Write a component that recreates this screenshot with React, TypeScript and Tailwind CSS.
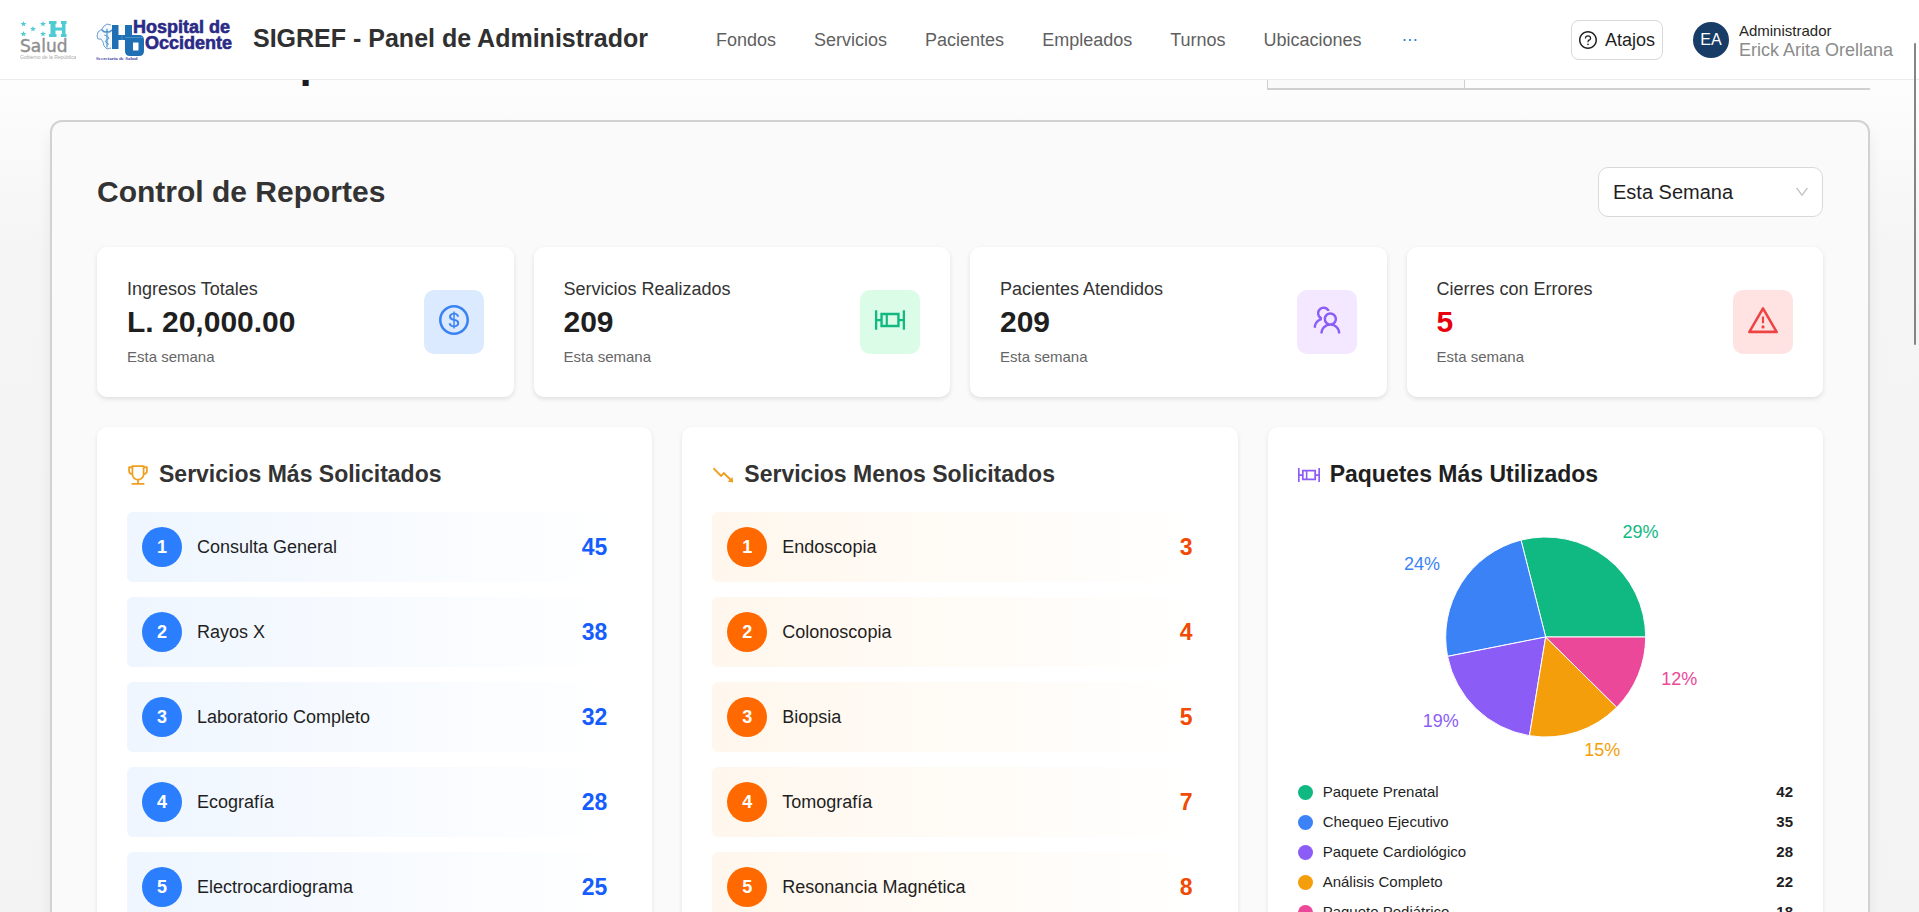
import { useState } from "react";
import type { ComponentType } from "react";
import {
  AiOutlineBoxPlot,
  AiOutlineDollar,
  AiOutlineDown,
  AiOutlineEllipsis,
  AiOutlineFall,
  AiOutlineQuestionCircle,
  AiOutlineTeam,
  AiOutlineTrophy,
  AiOutlineWarning,
} from "react-icons/ai";

type IconType = ComponentType<{ className?: string; viewBox?: string }>;

// Ant icons keep a margin of 64 units round the drawing; this crops it away.
const TIGHT = "64 64 896 896";

const NAV = ["Fondos", "Servicios", "Pacientes", "Empleados", "Turnos", "Ubicaciones"];

const STATS: { label: string; value: string; valueClass: string; boxClass: string; Icon: IconType }[] = [
  { label: "Ingresos Totales", value: "L. 20,000.00", valueClass: "text-[#1f1f1f]", boxClass: "bg-blue-100 text-[#3b82f6]", Icon: AiOutlineDollar },
  { label: "Servicios Realizados", value: "209", valueClass: "text-[#1f1f1f]", boxClass: "bg-green-100 text-[#10b981]", Icon: AiOutlineBoxPlot },
  { label: "Pacientes Atendidos", value: "209", valueClass: "text-[#1f1f1f]", boxClass: "bg-purple-100 text-[#8b5cf6]", Icon: AiOutlineTeam },
  { label: "Cierres con Errores", value: "5", valueClass: "text-[#e7000b]", boxClass: "bg-red-100 text-[#ef4444]", Icon: AiOutlineWarning },
];

const MOST: [string, number][] = [
  ["Consulta General", 45],
  ["Rayos X", 38],
  ["Laboratorio Completo", 32],
  ["Ecografía", 28],
  ["Electrocardiograma", 25],
];

const LEAST: [string, number][] = [
  ["Endoscopia", 3],
  ["Colonoscopia", 4],
  ["Biopsia", 5],
  ["Tomografía", 7],
  ["Resonancia Magnética", 8],
];

const PACKAGES = [
  { name: "Paquete Prenatal", value: 42, color: "#10b981", dot: "bg-[#10b981]" },
  { name: "Chequeo Ejecutivo", value: 35, color: "#3b82f6", dot: "bg-[#3b82f6]" },
  { name: "Paquete Cardiológico", value: 28, color: "#8b5cf6", dot: "bg-[#8b5cf6]" },
  { name: "Análisis Completo", value: 22, color: "#f59e0b", dot: "bg-[#f59e0b]" },
  { name: "Paquete Pediátrico", value: 18, color: "#ec4899", dot: "bg-[#ec4899]" },
];

const STAR = "M0-3 .8-.9 3-.9 1.2.5 1.9 2.6 0 1.3-1.9 2.6-1.2.5-3-.9-.8-.9Z";

function SaludLogo() {
  return (
    <svg width="56" height="42" viewBox="0 0 56 42" className="shrink-0" aria-label="Salud">
      <g fill="#4fcbd3">
        {[[3.5, 5], [23, 5], [13, 10], [3.5, 15], [23, 15]].map(([x, y]) => (
          <path key={`${x}-${y}`} d={STAR} transform={`translate(${x} ${y})`} />
        ))}
        <path d="M29 2h7.500v3h-1v3.500h6.500V5h-1V2h5.500v3h-1v10h1v3h-5.500v-3h1v-3.500h-6.500V15h1v3H29v-3h1.500V5H29z" />
      </g>
      <text x="0" y="33" fontSize="17" fontFamily="DejaVu Sans, sans-serif" fill="#8f8f8f" stroke="#8f8f8f" strokeWidth=".4">Salud</text>
      <text x="0" y="40" fontSize="5" fontFamily="Liberation Sans, sans-serif" fill="#a8a8a8">Gobierno de la República</text>
    </svg>
  );
}

function HospitalLogo() {
  return (
    <svg width="137" height="42" viewBox="0 0 137 42" className="shrink-0 overflow-visible" aria-label="Hospital de Occidente">
      <path d="M15 6 11 5 8 7 6 10 2 13 1 17 2 20 5 20 7 23 8 27 11 30 15 29" fill="#f4f9fd" stroke="#4b86c2" strokeWidth=".8" />
      <g fill="none" stroke="#4f93c9" strokeLinecap="round">
        <path d="M11 10v18" strokeWidth="1.200" />
        <path d="M6 11q2.500 3 5 1.500 2.500 1.500 5-1.500" strokeWidth="1.600" />
        <path d="M8.500 16q5 1.500 4.500 3.500-4 1.500-3.500 3.500 3.500 1 3 2.500" strokeWidth=".9" />
      </g>
      <path
        fillRule="evenodd"
        d="M16 6h6.500v10H29V6h7v10h7q5 0 5 5v11q0 5-5 5h-9q-5 0-5-5V21h-6.500v9H16zM37 23.500v8h5.500v-8z"
        fill="#1f6fb5"
      />
      <path d="M26 16v5M29 18.500h18" stroke="#5b9fd4" strokeWidth=".7" />
      <g fontFamily="Liberation Sans, Arial, sans-serif" fontWeight="700" fontSize="18" fill="#2b2a86" stroke="#2b2a86" strokeWidth=".6">
        <text x="37" y="14">Hospital de</text>
        <text x="49" y="30">Occidente</text>
      </g>
      <text x="0" y="41" fontSize="5" fontWeight="700" fontFamily="Liberation Serif, serif" fill="#4a48a4">Secretaria de Salud</text>
    </svg>
  );
}

function Header() {
  return (
    <header className="relative z-10 flex h-20 shrink-0 items-center border-b border-[#ececec] bg-white pr-[26px] pl-5">
      <div className="flex items-center gap-5">
        <SaludLogo />
        <HospitalLogo />
        <h1 className="pb-1 text-[25px] leading-8 font-bold whitespace-nowrap text-[#303030]">SIGREF - Panel de Administrador</h1>
      </div>
      <nav className="ml-17 flex items-center gap-[38px] text-lg text-[#5f5f5f]">
        {NAV.map((item) => (
          <a key={item} href="#">{item}</a>
        ))}
        <button type="button" aria-label="Más opciones" className="text-[#1677e6]">
          <AiOutlineEllipsis className="size-5" />
        </button>
      </nav>
      <div className="ml-auto flex items-center gap-[30px]">
        <button type="button" className="flex h-10 items-center gap-2 rounded-lg border border-[#d9d9d9] bg-white px-[7px] text-lg text-[#1f1f1f]">
          <AiOutlineQuestionCircle viewBox={TIGHT} className="size-[18px]" />
          Atajos
        </button>
        <div className="flex items-center gap-[10px]">
          <span className="flex size-9 items-center justify-center rounded-full bg-[#173d66] text-base text-white">EA</span>
          <div className="flex flex-col pt-0.5">
            <span className="text-[15px] leading-[18px] text-[#262626]">Administrador</span>
            <span className="text-lg leading-5 text-[#8c8c8c]">Erick Arita Orellana</span>
          </div>
        </div>
      </div>
    </header>
  );
}

function RankCard({ title, Icon, rows, rowClass, badgeClass, valueClass }: {
  title: string;
  Icon: IconType;
  rows: [string, number][];
  rowClass: string;
  badgeClass: string;
  valueClass: string;
}) {
  return (
    <section className="rounded-[10px] bg-white p-[30px] shadow-[0_2px_5px_rgba(0,0,0,0.09)]">
      <h3 className="mb-5 flex items-center gap-[10px] text-[23px] leading-[35px] font-bold text-[#333]">
        <Icon viewBox={TIGHT} className="size-[22px] text-[#f0a020]" />
        {title}
      </h3>
      <ol className="flex flex-col gap-[15px]">
        {rows.map(([name, value], i) => (
          <li key={name} className={`flex h-[70px] items-center gap-[15px] rounded-md px-[15px] ${rowClass}`}>
            <span className={`flex size-10 items-center justify-center rounded-full text-lg font-bold text-white ${badgeClass}`}>{i + 1}</span>
            <span className="flex-1 text-lg text-[#1f1f1f]">{name}</span>
            <span className={`text-[23px] leading-8 font-bold ${valueClass}`}>{value}</span>
          </li>
        ))}
      </ol>
    </section>
  );
}

function PieChart() {
  const total = PACKAGES.reduce((sum, p) => sum + p.value, 0);
  const point = (angle: number, r: number) => [200 + r * Math.cos(angle), 125 - r * Math.sin(angle)];
  let start = 0;
  const slices = PACKAGES.map((p) => {
    const end = start + (p.value / total) * Math.PI * 2;
    const [x1, y1] = point(start, 100);
    const [x2, y2] = point(end, 100);
    const [lx, ly] = point((start + end) / 2, 125);
    start = end;
    return { ...p, d: `M200 125L${x1} ${y1}A100 100 0 0 0 ${x2} ${y2}Z`, lx, ly, percent: Math.round((p.value / total) * 100) };
  });
  return (
    <svg height="250" viewBox="0 0 400 250" className="w-full" role="img" aria-label="Paquetes más utilizados">
      {slices.map((s) => (
        <path key={s.name} d={s.d} fill={s.color} stroke="#fff" />
      ))}
      {slices.map((s) => (
        <text key={s.name} x={s.lx} y={s.ly} fill={s.color} fontSize="18" textAnchor={s.lx > 200 ? "start" : "end"}>
          {`${s.percent}%`}
        </text>
      ))}
    </svg>
  );
}

export default function App() {
  const [period, setPeriod] = useState("Esta Semana");
  return (
    <div className="relative flex h-screen flex-col overflow-hidden bg-[#f4f4f4] font-['Liberation_Sans',Arial,sans-serif]">
      <Header />
      <main className="flex-1 overflow-hidden bg-linear-to-b from-[#fdfdfd] via-[#f5f5f5] via-20% to-[#f3f3f4] pr-[49px] pl-[50px]">
        <div className="mb-[30px] flex h-[10px] items-end justify-between">
          <h2 className="pb-1 text-[44px] leading-[48px] font-bold text-[#1a1a24]">Panel de Reportes</h2>
          <div className="flex h-12 w-[603px] border-b-2 border-l border-[#cfd0d2]">
            <div className="w-[197px] border-r border-[#cfd0d2] bg-[#fafafa]" />
          </div>
        </div>

        <div className="rounded-xl border-2 border-[#d0d2d4] bg-[#fafafa] p-[45px] shadow-[0_10px_15px_rgba(0,0,0,0.06)]">
          <div className="flex items-center justify-between">
            <h2 className="text-3xl font-bold text-[#333]">Control de Reportes</h2>
            <div className="relative">
              <select
                aria-label="Período"
                value={period}
                onChange={(e) => setPeriod(e.target.value)}
                className="h-[50px] w-[225px] appearance-none rounded-[10px] border border-[#d9d9d9] bg-white px-[14px] text-xl text-[#1f1f1f]"
              >
                <option>Esta Semana</option>
              </select>
              <AiOutlineDown viewBox={TIGHT} className="pointer-events-none absolute top-[18px] right-[14px] size-[14px] text-[#bfbfbf]" />
            </div>
          </div>

          <div className="mt-[30px] grid grid-cols-4 gap-5">
            {STATS.map(({ label, value, valueClass, boxClass, Icon }) => (
              <section key={label} className="flex items-center justify-between rounded-[10px] bg-white p-[30px] shadow-[0_2px_5px_rgba(0,0,0,0.11)]">
                <div className="flex flex-col">
                  <span className="text-lg leading-[25px] text-[#333]">{label}</span>
                  <span className={`text-3xl leading-10 font-bold ${valueClass}`}>{value}</span>
                  <span className="mt-[5px] text-[15px] leading-5 text-[#666]">Esta semana</span>
                </div>
                <div className={`h-16 rounded-[10px] p-[15px] ${boxClass}`}>
                  <Icon viewBox={TIGHT} className="size-[30px]" />
                </div>
              </section>
            ))}
          </div>

          <div className="mt-[30px] grid grid-cols-3 gap-[30px]">
            <RankCard
              title="Servicios Más Solicitados"
              Icon={AiOutlineTrophy}
              rows={MOST}
              rowClass="bg-linear-to-r from-blue-50 to-white"
              badgeClass="bg-[#2b7fff]"
              valueClass="text-[#155dfc]"
            />
            <RankCard
              title="Servicios Menos Solicitados"
              Icon={AiOutlineFall}
              rows={LEAST}
              rowClass="bg-linear-to-r from-orange-50 to-white"
              badgeClass="bg-[#ff6900]"
              valueClass="text-[#f04a05]"
            />
            <section className="rounded-[10px] bg-white p-[30px] shadow-[0_2px_5px_rgba(0,0,0,0.09)]">
              <h3 className="mb-5 flex items-center gap-[10px] text-[23px] leading-[35px] font-bold text-[#1f1f1f]">
                <AiOutlineBoxPlot viewBox={TIGHT} className="size-[22px] text-[#8b5cf6]" />
                Paquetes Más Utilizados
              </h3>
              <PieChart />
              <ul className="mt-5 flex flex-col gap-[10px]">
                {PACKAGES.map((p) => (
                  <li key={p.name} className="flex items-center gap-[10px] text-[15px] leading-5 text-[#1f1f1f]">
                    <span className={`size-[15px] rounded-full ${p.dot}`} />
                    <span className="flex-1">{p.name}</span>
                    <span className="font-bold">{p.value}</span>
                  </li>
                ))}
              </ul>
            </section>
          </div>
        </div>
      </main>
      <div className="absolute top-[43px] right-[3px] z-20 h-[302px] w-0.5 rounded-full bg-[#858585]" />
    </div>
  );
}
